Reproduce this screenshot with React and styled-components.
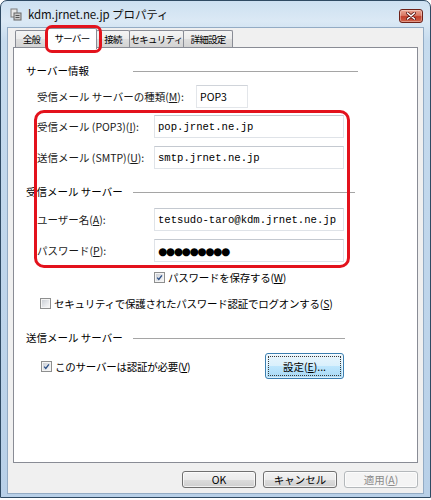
import styled, { createGlobalStyle } from "styled-components";

const GlobalStyle = createGlobalStyle`
  html, body {
    margin: 0;
    padding: 0;
    background: #ffffff;
  }
  body {
    font-family: "Noto Sans CJK JP", "Noto Sans", sans-serif;
    font-size: 10.5px;
    color: #000;
  }
  * {
    box-sizing: border-box;
  }
`;

const tabs = ["全般", "サーバー", "接続", "セキュリティ", "詳細設定"];
const tabWidths = [33, 50, 34, 55, 50];

const CheckMark = () => (
  <svg width="9" height="9" viewBox="0 0 9 9">
    <path d="M1.5 4.6 L3.6 6.9 L7.6 1.8" fill="none" stroke="#2b4f86" strokeWidth="1.7" />
  </svg>
);

const Checkbox = ({ checked }) => (
  <Box>
    <BoxInner>{checked && <CheckMark />}</BoxInner>
  </Box>
);

const WindowIcon = () => (
  <svg width="12" height="13" viewBox="0 0 12 13">
    <rect x="1" y="1" width="6" height="8" fill="#e8e8e8" stroke="#7d7d7d" />
    <rect x="4" y="5" width="7" height="7" fill="#c9c9c9" stroke="#666" />
    <rect x="5.5" y="7" width="4" height="1" fill="#555" />
    <rect x="5.5" y="9" width="4" height="1" fill="#555" />
  </svg>
);

const CloseGlyph = () => (
  <svg width="10" height="8" viewBox="0 0 10 8">
    <path d="M1.5 1 L8.5 7 M8.5 1 L1.5 7" stroke="#5a1410" strokeWidth="3" strokeLinecap="round" />
    <path d="M1.5 1 L8.5 7 M8.5 1 L1.5 7" stroke="#ffffff" strokeWidth="1.6" strokeLinecap="round" />
  </svg>
);

const App = () => {
  return (
    <>
      <GlobalStyle />
      <Window>
        <TitleBar>
          <WindowIcon />
          <Title>kdm.jrnet.ne.jp プロパティ</Title>
          <CloseButton>
            <CloseGlyph />
          </CloseButton>
        </TitleBar>
        <Client>
          <TabRow>
            {tabs.map((t, i) => (
              <Tab key={t} $active={i === 1} $width={tabWidths[i]}>
                {t}
              </Tab>
            ))}
          </TabRow>
          <Panel>
            <GroupHeader $top={15} $lineWidth={225}>
              <HeaderText>サーバー情報</HeaderText>
              <HeaderLine />
            </GroupHeader>
            <FieldRow $top={8}>
              <Label $width={159}>
                受信メール サーバーの種類(<u>M</u>):
              </Label>
              <TypeBox>POP3</TypeBox>
            </FieldRow>
            <FieldRow $top={7}>
              <Label>
                受信メール (POP3)(<u>I</u>):
              </Label>
              <TextBox>pop.jrnet.ne.jp</TextBox>
            </FieldRow>
            <FieldRow $top={8}>
              <Label>
                送信メール (SMTP)(<u>U</u>):
              </Label>
              <TextBox>smtp.jrnet.ne.jp</TextBox>
            </FieldRow>
            <GroupHeader $top={15} $lineWidth={222}>
              <HeaderText>受信メール サーバー</HeaderText>
              <HeaderLine />
            </GroupHeader>
            <FieldRow $top={10}>
              <Label>
                ユーザー名(<u>A</u>):
              </Label>
              <TextBox>tetsudo-taro@kdm.jrnet.ne.jp</TextBox>
            </FieldRow>
            <FieldRow $top={8}>
              <Label>
                パスワード(<u>P</u>):
              </Label>
              <TextBox $password>●●●●●●●●●</TextBox>
            </FieldRow>
            <CheckRow $top={9} $indent={128}>
              <Checkbox checked />
              <CheckText>
                パスワードを保存する(<u>W</u>)
              </CheckText>
            </CheckRow>
            <CheckRow $top={14} $indent={14}>
              <Checkbox />
              <CheckText>
                セキュリティで保護されたパスワード認証でログオンする(<u>S</u>)
              </CheckText>
            </CheckRow>
            <GroupHeader $top={21} $lineWidth={212}>
              <HeaderText>送信メール サーバー</HeaderText>
              <HeaderLine />
            </GroupHeader>
            <AuthRow>
              <CheckRow $top={0} $indent={0}>
                <Checkbox checked />
                <CheckText>
                  このサーバーは認証が必要(<u>V</u>)
                </CheckText>
              </CheckRow>
              <SettingsButton>
                設定(<u>E</u>)...
              </SettingsButton>
            </AuthRow>
          </Panel>
          <Footer>
            <Button>OK</Button>
            <Button>キャンセル</Button>
            <Button disabled>
              適用(<u>A</u>)
            </Button>
          </Footer>
        </Client>
        <Annotation $left={44} $top={24} $width={57} $height={28} $radius={7} />
        <Annotation $left={33} $top={109} $width={316} $height={158} $radius={10} />
      </Window>
    </>
  );
};

export default App;

const Window = styled.div`
  position: relative;
  width: 431px;
  height: 498px;
  display: flex;
  flex-direction: column;
  border: 1px solid #2f4a63;
  border-radius: 7px 7px 0 0;
  background: linear-gradient(180deg, #cde0f1 0%, #dbe9f5 20px, #c6dbee 40px, #b8d0e8 100%);
`;

const TitleBar = styled.div`
  height: 26px;
  flex-shrink: 0;
  display: flex;
  align-items: center;
  padding: 0 7px 0 9px;
  gap: 6px;
`;

const Title = styled.span`
  font-size: 11.5px;
  color: #111;
  letter-spacing: -0.1px;
`;

const CloseButton = styled.div`
  margin-left: auto;
  margin-top: 3px;
  width: 24px;
  height: 14px;
  display: flex;
  align-items: center;
  justify-content: center;
  border: 1px solid #6e2118;
  border-radius: 3px;
  background: linear-gradient(180deg, #eba592 0%, #d97a65 45%, #c2402c 55%, #d0644a 100%);
  box-shadow: inset 0 0 0 1px rgba(255, 255, 255, 0.35);
`;

const Client = styled.div`
  flex: 1;
  display: flex;
  flex-direction: column;
  margin: 0 6px 3px 6px;
  padding: 0 5px;
  background: #f0f0f0;
  border: 1px solid #93abc4;
`;

const TabRow = styled.div`
  height: 19px;
  flex-shrink: 0;
  display: flex;
  align-items: flex-end;
  padding-left: 2px;
`;

const Tab = styled.div`
  position: relative;
  z-index: ${(p) => (p.$active ? 2 : 1)};
  width: ${(p) => p.$width}px;
  height: ${(p) => (p.$active ? 21 : 17)}px;
  margin-bottom: ${(p) => (p.$active ? -2 : 0)}px;
  margin-left: -1px;
  display: flex;
  align-items: center;
  justify-content: center;
  padding-bottom: ${(p) => (p.$active ? 2 : 0)}px;
  border: 1px solid #898c95;
  border-bottom: none;
  border-radius: 2px 2px 0 0;
  background: ${(p) =>
    p.$active ? "#ffffff" : "linear-gradient(180deg, #f4f4f4 0%, #ebebeb 50%, #dedede 51%, #d3d3d3 100%)"};
  font-size: 9.5px;
  letter-spacing: -0.7px;
  white-space: nowrap;
  overflow: hidden;
  &:first-child {
    margin-left: 0;
  }
`;

const Panel = styled.div`
  height: 416px;
  flex-shrink: 0;
  display: flex;
  flex-direction: column;
  align-items: flex-start;
  padding-left: 12px;
  background: #ffffff;
  border: 1px solid #898c95;
`;

const GroupHeader = styled.div`
  height: 14px;
  margin-top: ${(p) => p.$top}px;
  display: grid;
  grid-template-columns: 107px ${(p) => p.$lineWidth}px;
  align-items: center;
`;

const HeaderText = styled.span`
  white-space: nowrap;
`;

const HeaderLine = styled.div`
  height: 1px;
  background: #a5a5a5;
  margin-top: 1px;
`;

const FieldRow = styled.div`
  height: 23px;
  margin-top: ${(p) => p.$top}px;
  padding-left: 11px;
  display: flex;
  align-items: center;
`;

const Label = styled.span`
  width: ${(p) => p.$width || 117}px;
  flex-shrink: 0;
  white-space: nowrap;
  color: #1a1a1a;
`;

const TextBox = styled.div`
  width: 190px;
  height: 23px;
  display: flex;
  align-items: center;
  padding-left: 3px;
  background: #ffffff;
  border: 1px solid #dfe3e8;
  border-top-color: #c4c9d0;
  font-family: ${(p) => (p.$password ? '"DejaVu Sans", sans-serif' : '"Liberation Mono", monospace')};
  font-size: ${(p) => (p.$password ? "10.5px" : "10.6px")};
  letter-spacing: ${(p) => (p.$password ? "-1.3px" : "0")};
  white-space: nowrap;
  overflow: hidden;
`;

const TypeBox = styled.div`
  width: 52px;
  height: 23px;
  display: flex;
  align-items: center;
  padding-left: 3px;
  border: 1px solid #e3e6ea;
  border-top-color: #d0d4da;
  background: #ffffff;
`;

const CheckRow = styled.div`
  height: 12px;
  margin-top: ${(p) => p.$top}px;
  padding-left: ${(p) => p.$indent}px;
  display: flex;
  align-items: center;
  gap: 3px;
  white-space: nowrap;
`;

const CheckText = styled.span`
  letter-spacing: -0.25px;
`;

const Box = styled.span`
  width: 11px;
  height: 11px;
  flex-shrink: 0;
  padding: 1px;
  border: 1px solid #8e8f8f;
  background: #f4f4f4;
`;

const BoxInner = styled.span`
  display: flex;
  align-items: center;
  justify-content: center;
  width: 100%;
  height: 100%;
  background: linear-gradient(135deg, #cbcfd5 0%, #e6e8eb 60%, #f6f6f6 100%);
`;

const AuthRow = styled.div`
  width: 318px;
  height: 26px;
  margin-top: 9px;
  padding-left: 15px;
  display: flex;
  align-items: center;
  justify-content: space-between;
`;

const SettingsButton = styled.div`
  position: relative;
  width: 79px;
  height: 26px;
  display: flex;
  align-items: center;
  justify-content: center;
  border: 1px solid #3c7fb1;
  border-radius: 3px;
  background: linear-gradient(180deg, #eaf6fd 0%, #d9f0fc 50%, #bee6fd 51%, #a7d9f5 100%);
  box-shadow: inset 0 0 0 1px rgba(255, 255, 255, 0.6);
  &::after {
    content: "";
    position: absolute;
    inset: 2px;
    border: 1px dotted #3a3a3a;
  }
`;

const Footer = styled.div`
  flex: 1;
  display: flex;
  justify-content: flex-end;
  align-items: flex-start;
  gap: 7px;
  padding-top: 8px;
`;

const Button = styled.div`
  width: 74px;
  height: 17px;
  display: flex;
  align-items: center;
  justify-content: center;
  border: 1px solid ${(p) => (p.disabled ? "#b4b8bb" : "#707070")};
  border-radius: 3px;
  background: ${(p) =>
    p.disabled ? "#f4f4f4" : "linear-gradient(180deg, #f2f2f2 0%, #ebebeb 50%, #dddddd 51%, #cfcfcf 100%)"};
  box-shadow: inset 0 0 0 1px rgba(255, 255, 255, 0.7);
  color: ${(p) => (p.disabled ? "#8a8a8a" : "#000")};
`;

const Annotation = styled.div`
  position: absolute;
  left: ${(p) => p.$left}px;
  top: ${(p) => p.$top}px;
  width: ${(p) => p.$width}px;
  height: ${(p) => p.$height}px;
  border: 3px solid #e3121c;
  border-radius: ${(p) => p.$radius}px;
  pointer-events: none;
  z-index: 5;
`;
